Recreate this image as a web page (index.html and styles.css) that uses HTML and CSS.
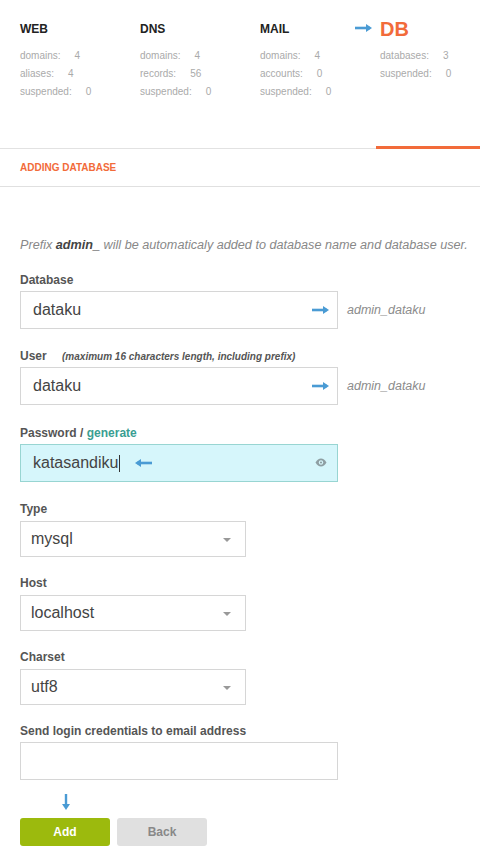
FILE: index.html
```html
<!DOCTYPE html>
<html>
<head>
<meta charset="utf-8">
<link rel="stylesheet" href="styles.css">
</head>
<body>
<div class="stats">
  <div class="col">
    <div class="col-title">WEB</div>
    <div class="line"><span class="k">domains:</span><span class="v">4</span></div>
    <div class="line"><span class="k">aliases:</span><span class="v">4</span></div>
    <div class="line"><span class="k">suspended:</span><span class="v">0</span></div>
  </div>
  <div class="col">
    <div class="col-title">DNS</div>
    <div class="line"><span class="k">domains:</span><span class="v">4</span></div>
    <div class="line"><span class="k">records:</span><span class="v">56</span></div>
    <div class="line"><span class="k">suspended:</span><span class="v">0</span></div>
  </div>
  <div class="col">
    <div class="col-title">MAIL</div>
    <div class="line"><span class="k">domains:</span><span class="v">4</span></div>
    <div class="line"><span class="k">accounts:</span><span class="v">0</span></div>
    <div class="line"><span class="k">suspended:</span><span class="v">0</span></div>
  </div>
  <div class="col">
    <div class="col-title db">
      <svg class="db-arrow" width="18" height="10" viewBox="0 0 18 10"><path d="M0 5H15" stroke="#4a9bd4" stroke-width="2.6"/><path d="M11 1L17 5L11 9Z" fill="#4a9bd4"/></svg>
      DB</div>
    <div class="line"><span class="k">databases:</span><span class="v">3</span></div>
    <div class="line"><span class="k">suspended:</span><span class="v">0</span></div>
  </div>
</div>
<div class="tabline"><div class="tl-gray"></div><div class="tl-active"></div></div>
<div class="subhead">ADDING DATABASE</div>

<div class="form">
  <p class="prefix">Prefix <b>admin_</b> will be automaticaly added to database name and database user.</p>

  <div class="field f-db">
    <div class="label">Database</div>
    <div class="row">
      <div class="input">dataku
        <svg class="in-arrow" width="18" height="10" viewBox="0 0 18 10"><path d="M0 5H15" stroke="#4a9bd4" stroke-width="2.6"/><path d="M11 1L17 5L11 9Z" fill="#4a9bd4"/></svg>
      </div>
      <span class="hint">admin_dataku</span>
    </div>
  </div>

  <div class="field f-user">
    <div class="label">User <span class="note">(maximum 16 characters length, including prefix)</span></div>
    <div class="row">
      <div class="input">dataku
        <svg class="in-arrow" width="18" height="10" viewBox="0 0 18 10"><path d="M0 5H15" stroke="#4a9bd4" stroke-width="2.6"/><path d="M11 1L17 5L11 9Z" fill="#4a9bd4"/></svg>
      </div>
      <span class="hint">admin_dataku</span>
    </div>
  </div>

  <div class="field f-pw">
    <div class="label">Password / <span class="gen">generate</span></div>
    <div class="row">
      <div class="input pw"><span>katasandiku</span><span class="caret"></span>
        <svg class="back-arrow" width="18" height="10" viewBox="0 0 18 10"><path d="M3 5H18" stroke="#4a9bd4" stroke-width="2.6"/><path d="M7 1L1 5L7 9Z" fill="#4a9bd4"/></svg>
        <svg class="eye" width="12" height="9" viewBox="0 0 12 9"><path d="M0.5 4.5C2 1.8 4 0.5 6 0.5S10 1.8 11.5 4.5C10 7.2 8 8.5 6 8.5S2 7.2 0.5 4.5Z" fill="#8e9ea2"/><circle cx="6" cy="4.5" r="2.2" fill="#d6f6fb"/><circle cx="6" cy="4.5" r="1.1" fill="#8e9ea2"/></svg>
      </div>
    </div>
  </div>

  <div class="field f-type">
    <div class="label sel-label">Type</div>
    <div class="select">mysql<span class="tri"></span></div>
  </div>
  <div class="field">
    <div class="label sel-label">Host</div>
    <div class="select">localhost<span class="tri"></span></div>
  </div>
  <div class="field">
    <div class="label sel-label">Charset</div>
    <div class="select">utf8<span class="tri"></span></div>
  </div>

  <div class="field">
    <div class="label">Send login credentials to email address</div>
    <div class="input email"></div>
  </div>

  <div class="down">
    <svg width="10" height="17" viewBox="0 0 10 17"><path d="M5 0V13" stroke="#4a9bd4" stroke-width="2.4"/><path d="M1 10L5 16L9 10Z" fill="#4a9bd4"/></svg>
  </div>
  <div class="buttons">
    <div class="btn add">Add</div>
    <div class="btn back">Back</div>
  </div>
</div>
</body>
</html>
```

FILE: styles.css
```css
* { box-sizing: border-box; }
html, body { margin: 0; padding: 0; background: #fff; }
body { font-family: "Liberation Sans", Arial, sans-serif; width: 480px; height: 864px; overflow: hidden; }

.stats { display: flex; align-items: flex-start; padding: 19px 0 0 20px; height: 146px; overflow: hidden; }
.col { width: 120px; flex: 0 0 120px; }
.col-title { height: 20px; line-height: 20px; font-size: 12px; font-weight: bold; color: #222; margin-bottom: 8px; }
.col-title.db { position: relative; font-size: 20px; color: #f26b3a; }
.db-arrow { position: absolute; left: -25px; top: 4px; }
.line { height: 18px; line-height: 18px; font-size: 10px; color: #aaa; }
.line .v { margin-left: 14px; }

.tabline { display: flex; align-items: flex-end; height: 3px; }
.tl-gray { flex: 1; height: 1px; background: #e2e2e2; }
.tl-active { width: 104px; height: 3px; background: #f26b3a; }

.subhead { height: 38px; line-height: 37px; padding-left: 20px; font-size: 10px; font-weight: bold; color: #f26b3a; border-bottom: 1px solid #e0e0e0; }

.form { padding: 0 20px; }
.prefix { margin: 50px 0 0; font-size: 12.65px; line-height: 16px; font-style: italic; color: #888; white-space: nowrap; }
.prefix b { color: #444; }

.field { margin-top: 18px; }
.f-db { margin-top: 19px; }
.f-user { margin-top: 19px; }
.f-pw { margin-top: 20px; }
.f-type { margin-top: 19px; }
.label { height: 16px; line-height: 16px; font-size: 12px; font-weight: bold; color: #555; margin-bottom: 3px; }
.sel-label { margin-bottom: 4px; }
.note { font-size: 10px; font-style: italic; margin-left: 12px; }
.gen { color: #3a9e92; }

.row { display: flex; align-items: center; }
.input { position: relative; width: 318px; height: 38px; border: 1px solid #d6d6d6; padding-left: 12px; font-size: 16px; line-height: 36px; color: #444; display: flex; align-items: center; }
.in-arrow { position: absolute; right: 7px; top: 13px; }
.hint { margin-left: 9px; font-size: 12.5px; font-style: italic; color: #8c8c8c; }
.pw { background: #d6f6fb; border-color: #98d5d2; }
.caret { display: inline-block; width: 1px; height: 17px; background: #333; margin-left: 1px; }
.back-arrow { margin-left: 14px; }
.eye { position: absolute; right: 10px; top: 13px; }

.select { position: relative; width: 226px; height: 36px; border: 1px solid #d6d6d6; padding-left: 10px; font-size: 16px; line-height: 34px; color: #444; }
.tri { position: absolute; right: 14px; top: 16px; width: 0; height: 0; border-left: 4px solid transparent; border-right: 4px solid transparent; border-top: 4px solid #999; }

.down { height: 22px; padding: 14px 0 0 41px; }
.down svg { display: block; }
.buttons { display: flex; gap: 7px; margin-top: 16px; }
.btn { width: 90px; height: 28px; line-height: 28px; border-radius: 3px; text-align: center; font-size: 12px; font-weight: bold; }
.add { background: #9cba0d; color: #fff; }
.back { background: #e0e0e0; color: #888; }
```
